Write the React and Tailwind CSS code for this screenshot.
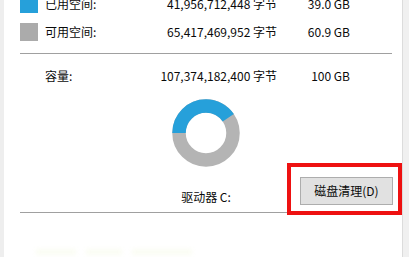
import React from "react";

function Donut() {
  const c = 2 * Math.PI * 27;
  const blue = (145 / 360) * c;
  return (
    <svg width="68" height="68" viewBox="0 0 68 68">
      <circle cx="34" cy="34" r="27" fill="none" stroke="#b4b4b4" strokeWidth="13.5" />
      <circle
        cx="34"
        cy="34"
        r="27"
        fill="none"
        stroke="#26a0da"
        strokeWidth="13.5"
        strokeDasharray={`${blue} ${c}`}
        transform="rotate(180 34 34)"
      />
    </svg>
  );
}

function Row({ color, label, bytes, gb }) {
  return (
    <div className="h-[28px] flex items-center">
      <div className={`w-[18px] h-[18px] shrink-0 ${color}`} />
      <div className="w-[105px] ml-[7px] whitespace-nowrap">{label}</div>
      <div className="w-[127px] text-right whitespace-nowrap">{bytes}</div>
      <div className="w-[73px] text-right whitespace-nowrap">{gb}</div>
    </div>
  );
}

export default function App() {
  return (
    <div
      className="w-[409px] h-[257px] flex bg-white overflow-hidden text-[12px] leading-[16px] text-[#0a0a0a]"
      style={{ fontFamily: '"Noto Sans CJK SC", "Noto Sans", sans-serif' }}
    >
      <div className="w-[4px] shrink-0 bg-[#eeeeee]" />
      <div className="flex-1 pl-[16px] pr-[10px] flex flex-col">
        <div className="-mt-[10px]">
          <Row color="bg-[#26a0da]" label="已用空间:" bytes="41,956,712,448 字节" gb="39.0 GB" />
          <Row color="bg-[#ababab]" label="可用空间:" bytes="65,417,469,952 字节" gb="60.9 GB" />
        </div>
        <div className="mt-[7px] border-t border-[#a0a0a0]" />
        <div className="mt-[12px] h-[20px] flex items-center">
          <div className="w-[18px] shrink-0" />
          <div className="w-[105px] ml-[7px]">容量:</div>
          <div className="w-[127px] text-right whitespace-nowrap">107,374,182,400 字节</div>
          <div className="w-[73px] text-right whitespace-nowrap">100 GB</div>
        </div>
        <div className="mt-[13px] flex justify-center">
          <Donut />
        </div>
        <div className="mt-[10px] grid grid-cols-[1fr_auto_1fr] items-end">
          <div />
          <div className="whitespace-nowrap">驱动器 C:</div>
          <div className="flex justify-end -mr-[1px]">
            <div className="relative">
              <div className="w-[93px] h-[28px] bg-[#e1e1e1] border border-[#adadad] flex items-center justify-center whitespace-nowrap">
                磁盘清理(D)
              </div>
              <div className="absolute -left-[13px] -top-[14px] -right-[9px] -bottom-[10px] border-[4px] border-[#ee1111]" />
            </div>
          </div>
        </div>
        <div className="mt-[7px] border-t border-[#a0a0a0]" />
        <div className="mt-[36px] flex gap-[10px] pl-[16px] opacity-25">
          <div className="w-[40px] h-[6px] bg-[#eef6d0] blur-[2px]" />
          <div className="w-[36px] h-[6px] bg-[#eef6d0] blur-[2px]" />
          <div className="w-[60px] h-[6px] bg-[#eef6d0] blur-[2px]" />
        </div>
      </div>
      <div className="w-[7px] shrink-0 border-l border-[#dcdcdc] bg-[#f0f0f0]" />
    </div>
  );
}
